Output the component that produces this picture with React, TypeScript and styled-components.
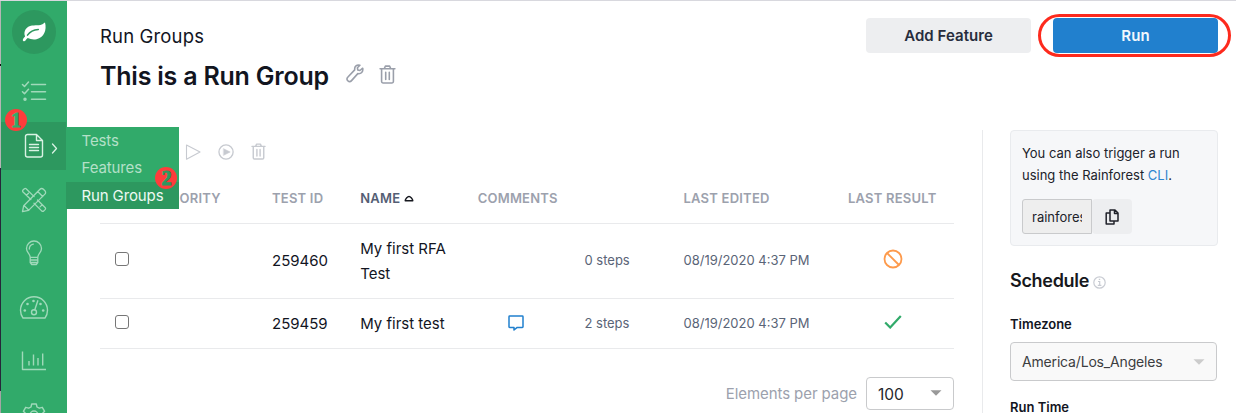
import React from "react";
import styled, { createGlobalStyle, css } from "styled-components";

const GlobalStyle = createGlobalStyle`
  * { box-sizing: border-box; }
  body { margin: 0; background: #fff; font-family: Inter, "Liberation Sans", sans-serif; color: #12151f; overflow: hidden; }
  svg { display: block; flex: none; }
`;

const Page = styled.div`
  display: flex;
  height: 413px;
  overflow: hidden;
  border-top: 1px solid #d8d8de;
`;

const Edge = styled.div`
  width: 1.4px;
  flex: none;
  background: linear-gradient(#b5b5b5 0 63px, #111 63px 65px, #b5b5b5 65px 167px, #26263a 167px 390px, #a5a5a5 390px);
`;

const Sidebar = styled.nav`
  width: 65.6px;
  flex: none;
  background: #31aa6a;
  display: flex;
  flex-direction: column;
  align-items: stretch;
  padding-top: 9px;
`;

const Logo = styled.div`
  width: 44px;
  height: 44px;
  flex: none;
  margin: 0 auto 14px;
  border-radius: 50%;
  background: #2d985f;
  display: flex;
  align-items: center;
  justify-content: center;
`;

const NavItem = styled.div<{ $active?: boolean }>`
  position: relative;
  height: 48px;
  margin: 0 1px 5.8px 0;
  flex: none;
  display: flex;
  align-items: center;
  justify-content: center;
  color: ${(p) => (p.$active ? "#d9f2e4" : "#a0d9ba")};
  background: ${(p) => (p.$active ? "#2d985f" : "transparent")};
`;

const Chevron = styled.svg`
  position: absolute;
  left: 50px;
  top: 21px;
`;

const Submenu = styled.div`
  position: absolute;
  z-index: 2;
  left: 64.6px;
  top: 5px;
  width: 113px;
  background: #31aa6a;
`;

const SubItem = styled.div<{ $active?: boolean }>`
  height: ${(p) => (p.$active ? 27 : 27.5)}px;
  line-height: 27px;
  padding-left: 15.5px;
  font-size: 15px;
  white-space: nowrap;
  letter-spacing: -0.12px;
  color: ${(p) => (p.$active ? "#eefaf3" : "#b4e0c8")};
  background: ${(p) => (p.$active ? "#2d985f" : "transparent")};
`;

const Step = styled.span<{ $x: number; $y: number; $digit: string }>`
  position: absolute;
  z-index: 3;
  left: ${(p) => p.$x}px;
  top: ${(p) => p.$y}px;
  width: 22px;
  height: 22px;
  border-radius: 50%;
  background: #fe3c3b;
  color: ${(p) => p.$digit};
  font: bold 20px/22px "Liberation Serif", serif;
  -webkit-text-stroke: 1px ${(p) => p.$digit};
  text-align: center;
`;

const Main = styled.main`
  flex: 1;
  min-width: 0;
  padding: 17px 18px 0 33px;
`;

const Header = styled.header`
  display: flex;
  justify-content: space-between;
  height: 112px;
`;

const Crumb = styled.div`
  font-size: 18.5px;
  line-height: 24px;
  letter-spacing: 0.15px;
  margin-top: 6px;
`;

const TitleRow = styled.div`
  display: flex;
  align-items: center;
  margin-top: 12px;
  color: #9a9faa;
`;

const Title = styled.h1`
  margin: 0 17px 0 0;
  font-size: 25px;
  line-height: 32px;
  font-weight: 600;
  letter-spacing: -0.22px;
  color: #12151f;
  white-space: nowrap;
`;

const TitleIcon = styled.span`
  margin: -4px 15px 0 0;
`;

const Actions = styled.div`
  display: flex;
  gap: 22px;
`;

const Button = styled.button<{ $primary?: boolean }>`
  position: relative;
  width: 165px;
  height: 35px;
  padding: 0;
  border: 0;
  border-radius: 4px;
  font: 600 15px/35px Inter, sans-serif;
  letter-spacing: 0.05px;
  color: ${(p) => (p.$primary ? "#f2f8fd" : "#272d3d")};
  background: ${(p) => (p.$primary ? "#2180ce" : "#edeef0")};
`;

const Ring = styled.span`
  position: absolute;
  inset: -4px -13px -4px -15px;
  border: 3px solid #fd2a1d;
  border-radius: 22px;
`;

const Columns = styled.div`
  display: flex;
`;

const TableArea = styled.section`
  width: 854px;
  flex: none;
`;

const Toolbar = styled.div`
  display: flex;
  gap: 16px;
  height: 43px;
  align-items: center;
  padding-left: 84.5px;
  color: #c7cad0;
`;

const Row = styled.div<{ $h: number }>`
  display: grid;
  grid-template-columns: 58.5px 113.5px 88.2px 117.5px 106.8px 99px 164.5px 106px;
  height: ${(p) => p.$h}px;
  align-items: center;
  border-bottom: 1px solid #e9eaec;
`;

const Th = styled.div<{ $active?: boolean }>`
  display: flex;
  align-items: center;
  gap: 4px;
  font-size: 13px;
  line-height: 18px;
  font-weight: 600;
  letter-spacing: 0.22px;
  white-space: nowrap;
  color: ${(p) => (p.$active ? "#545e74" : "#9ca1ad")};
`;

const Strong = styled.div<{ $lift?: number }>`
  font-size: 15px;
  line-height: 25px;
  padding: 0 10px ${(p) => p.$lift ?? 0}px 0;
`;

const Small = styled.div<{ $lift?: number }>`
  font-size: 13px;
  line-height: 20px;
  padding-bottom: ${(p) => p.$lift ?? 1}px;
  color: #5a6477;
  white-space: nowrap;
`;

const Checkbox = styled.span`
  display: block;
  width: 14px;
  height: 14px;
  margin: -4px 0 0 15px;
  border: 1px solid #767676;
  border-radius: 3px;
`;

const IconCell = styled.div<{ $left: number; $lift: number }>`
  padding: 0 0 ${(p) => p.$lift}px ${(p) => p.$left}px;
`;

const Pager = styled.div`
  display: flex;
  justify-content: flex-end;
  align-items: center;
  margin-top: 28px;
  font-size: 15px;
  letter-spacing: -0.08px;
  color: #9ca1ad;
`;

const Select = styled.div<{ $kind: "pager" | "zone" }>`
  display: flex;
  align-items: center;
  justify-content: space-between;
  border: 1px solid #c9cacc;
  border-radius: 4px;
  ${(p) =>
    p.$kind === "pager"
      ? css`width: 88px; height: 33px; margin-left: 9px; padding: 2px 11px 0 11px; font-size: 15.5px; color: #24262c; svg { color: #999; margin-top: -3px; }`
      : css`width: 207px; height: 39px; margin-top: 9px; padding: 0 11px; font-size: 14px; letter-spacing: -0.17px; color: #3c3d40; background: #f9f9f9; svg { color: #ccc; }`}
`;

const Aside = styled.aside`
  flex: 1;
  margin-left: 28px;
  padding-left: 27px;
  border-left: 1px solid #e9eaec;
  height: 290px;
`;

const Card = styled.div`
  height: 116px;
  padding: 11px;
  border: 1px solid #e9ebee;
  border-radius: 4px;
  background: #f6f7f9;
  font-size: 13px;
  line-height: 22px;
  color: #20222a;
  white-space: nowrap;
`;

const Link = styled.span`
  color: #2f86cf;
`;

const Command = styled.div`
  display: flex;
  margin-top: 13px;
`;

const CommandInput = styled.div`
  width: 70px;
  height: 35px;
  padding: 0 9px;
  border: 1px solid #c9cacc;
  border-radius: 3px 0 0 3px;
  background: #eeeeee;
  line-height: 35px;
`;

const Clip = styled.div`
  overflow: hidden;
`;

const CopyButton = styled.div`
  display: flex;
  align-items: center;
  justify-content: center;
  width: 40px;
  height: 35px;
  border-radius: 4px;
  background: #edeef0;
`;

const Section = styled.h2`
  display: flex;
  align-items: center;
  gap: 4px;
  margin: 23px 0 0;
  font-size: 18px;
  line-height: 24px;
  font-weight: 600;
  letter-spacing: -0.3px;
  color: #17181c;

  svg { margin-top: 2px; }
`;

const Label = styled.div<{ $top: number }>`
  margin-top: ${(p) => p.$top}px;
  font-size: 13px;
  line-height: 18px;
  font-weight: 600;
`;

const line = { fill: "none", stroke: "currentColor", strokeLinecap: "round", strokeLinejoin: "round" } as const;

const Leaf = () => (
  <svg width="26" height="22" viewBox="0 0 26 22">
    <path d="M24 1.5C26 9 23 16.5 15.5 18.2c-3.5.8-6.2-.2-8.8-1.2-1 .8-1.7 1.9-2.4 2.8-1 1-3 .1-2.4-1.4.5-1.2 1.6-2.1 2.2-2.9C1.9 10.5 5.5 5.3 11 4.6c5-.7 9.5.4 12-2.6z" fill="#fff" />
    <path d="M6.500 14.200c2.500-3.700 6-5.500 10.800-5.700" fill="none" stroke="#2d985f" strokeWidth="1.500" strokeLinecap="round" />
  </svg>
);

const TasksIcon = () => (
  <svg width="26" height="22" viewBox="0 0 26 22" {...line} strokeWidth="1.500">
    <path d="M1.500 3.500l2 2 4-4.500M1.500 10.700l2 2 4-4.500M10.500 3.500h14M10.500 10.700h14M10.500 18.200h14" />
    <circle cx="4" cy="18.200" r="1" fill="currentColor" />
  </svg>
);

const FileIcon = () => (
  <svg width="20" height="26" viewBox="0 0 20 26" {...line} strokeWidth="1.400">
    <path d="M12.500 1.500H3.500a2 2 0 0 0-2 2v18.500a2 2 0 0 0 2 2h13a2 2 0 0 0 2-2V7.500zM12.500 1.500v6h6M5.500 11.500h9M5.500 14.500h9M5.500 17.500h9" />
  </svg>
);

const ToolsIcon = () => (
  <svg width="26" height="26" viewBox="0 0 26 26" {...line} strokeWidth="1.300">
    <path d="M9.800 12.500L1.800 4.800a1.500 1.500 0 0 1 0-1.600l1.600-1.500a1.500 1.500 0 0 1 1.700 0l8 7.900M16.500 13l7.800 7.700a1.500 1.500 0 0 1 0 1.700l-1.700 1.700a1.500 1.500 0 0 1-1.700 0L13 16.300M5.500 8.300l2-2M19 19.900l2-2" />
    <path d="M19 2.200a2.400 2.400 0 0 1 3.400 0l1.500 1.500a2.400 2.400 0 0 1 0 3.400L7.500 23.400l-6 1.300 1.200-6zM16.700 4.500l5 5M3 18.500l4.800 4.800" />
  </svg>
);

const BulbIcon = () => (
  <svg width="18" height="26" viewBox="0 0 18 26" {...line} strokeWidth="1.300">
    <path d="M5.200 17.300C5 13.500 1.500 12.500 1.500 8.500a7.500 7.500 0 0 1 15 0c0 4-3.500 5-3.700 8.800zM5.200 17.300v5.200l1.500 2h4.600l1.500-2v-5.200M5.200 20h7.600M5.500 22.500h7M4.300 9c0-2.600 1.600-4.400 4-4.900" />
  </svg>
);

const GaugeIcon = () => (
  <svg width="30" height="26" viewBox="0 0 30 26" {...line} strokeWidth="1.400">
    <path d="M4 24h22c1.700-2.200 2.500-4.700 2.500-7.700a13.500 13.500 0 0 0-27 0c0 3 .8 5.500 2.500 7.700zM15.800 15.800l3-9" />
    <circle cx="15" cy="18.300" r="2.500" />
    <g fill="currentColor" stroke="none"><circle cx="5.800" cy="16.500" r="1.300" /><circle cx="8.500" cy="10" r="1.300" /><circle cx="14.500" cy="7" r="1.300" /><circle cx="21.500" cy="10" r="1.300" /><circle cx="24.200" cy="16.500" r="1.300" /></g>
  </svg>
);

const ChartIcon = () => (
  <svg width="26" height="22" viewBox="0 0 26 22" {...line} strokeWidth="1.400" strokeLinecap="butt">
    <path d="M1.500 1.500v18h23.500M8 11v4.500M12.500 4.500v11M17 8v7.500M21.700 3.500v12" />
  </svg>
);

const GearIcon = () => (
  <svg width="26" height="26" viewBox="0 0 26 26" {...line} strokeWidth="1.400">
    <path d="M10.700 2h4.600l.7 3 2.300 1.200 3-.9 2.300 4-2.200 2.200v3l2.200 2.200-2.300 4-3-.9L16 21l-.7 3h-4.600l-.7-3-2.300-1.200-3 .9-2.300-4 2.200-2.200v-3L2.400 9.300l2.300-4 3 .9L10 5z" />
    <circle cx="13" cy="13" r="4" />
  </svg>
);

const WrenchIcon = () => (
  <svg width="18" height="20" viewBox="0 0 18 20" {...line} strokeWidth="1.600">
    <path d="M16.700 4.200l-2.800 2.300-2.100-.5-.4-2.200 2.500-2.500c-3-1-5.700 1.200-5.200 4.600L1.700 13.300a2.200 2.200 0 0 0 0 3.300l.4.400a2.200 2.200 0 0 0 3.200-.1l6.500-7.300c3.200.6 5.600-1.800 4.900-5.400z" />
  </svg>
);

const TrashIcon = ({ size }: { size: number }) => (
  <svg width={size - 2} height={size} viewBox="0 0 16 18" {...line} strokeWidth="1.500">
    <path d="M1 3.500h14M5 3.300l1-2.200h4l1 2.200M2.400 3.600v12.100c0 .8.500 1.300 1.300 1.300h8.600c.8 0 1.300-.5 1.300-1.300V3.600M6.300 6.800v7M9.700 6.800v7" />
  </svg>
);

const Caret = () => (
  <svg width="12" height="6" viewBox="0 0 12 6"><path d="M.5.300h11L6 5.800z" fill="currentColor" /></svg>
);

export default function App() {
  return (
    <>
      <GlobalStyle />
      <Page>
        <Edge />
        <Sidebar>
          <Logo><Leaf /></Logo>
          <NavItem><TasksIcon /></NavItem>
          <NavItem $active>
            <FileIcon />
            <Chevron width="7" height="11" viewBox="0 0 7 11" {...line} strokeWidth="1.300"><path d="M1.500 1l4 4.500-4 4.500" /></Chevron>
            <Step $x={3.5} $y={-13} $digit="#31aa6a">1</Step>
            <Submenu>
              <SubItem>Tests</SubItem>
              <SubItem>Features</SubItem>
              <SubItem $active>Run Groups</SubItem>
              <Step $x={89.5} $y={40} $digit="#2d985f">2</Step>
            </Submenu>
          </NavItem>
          <NavItem><ToolsIcon /></NavItem>
          <NavItem><BulbIcon /></NavItem>
          <NavItem><GaugeIcon /></NavItem>
          <NavItem><ChartIcon /></NavItem>
          <NavItem><GearIcon /></NavItem>
        </Sidebar>
        <Main>
          <Header>
            <div>
              <Crumb>Run Groups</Crumb>
              <TitleRow>
                <Title>This is a Run Group</Title>
                <TitleIcon><WrenchIcon /></TitleIcon>
                <TitleIcon><TrashIcon size={19} /></TitleIcon>
              </TitleRow>
            </div>
            <Actions>
              <Button>Add Feature</Button>
              <Button $primary>Run<Ring /></Button>
            </Actions>
          </Header>
          <Columns>
            <TableArea>
              <Toolbar>
                <svg width="18" height="18" viewBox="0 0 18 18" {...line} strokeWidth="1.100"><path d="M2.500 2l13.500 7-13.500 7.200z" /></svg>
                <svg width="17" height="18" viewBox="0 0 18 18" {...line} strokeWidth="1.400"><circle cx="8.500" cy="9" r="7.500" /><path d="M6 5.500l7 3.500-7 3.500z" fill="currentColor" strokeWidth=".5" /></svg>
                <TrashIcon size={17} />
              </Toolbar>
              <Row $h={51}>
                <div />
                <Th>PRIORITY</Th>
                <Th>TEST ID</Th>
                <Th $active>NAME
                  <svg width="10" height="7" viewBox="0 0 10 7" fill="none" stroke="#16181f" strokeWidth="1.400" strokeLinejoin="round"><path d="M1.200 5.700C1.200 4.200 3.500 1.500 5 1.500S8.800 4.200 8.800 5.700z" /></svg>
                </Th>
                <Th>COMMENTS</Th>
                <div />
                <Th>LAST EDITED</Th>
                <Th>LAST RESULT</Th>
              </Row>
              <Row $h={75}>
                <Checkbox />
                <div />
                <Strong $lift={2}>259460</Strong>
                <Strong>My first RFA Test</Strong>
                <div />
                <Small $lift={2}>0 steps</Small>
                <Small $lift={2}>08/19/2020 4:37 PM</Small>
                <IconCell $left={35} $lift={4}>
                  <svg width="20" height="20" viewBox="0 0 20 20" fill="none" stroke="#fd9a4c" strokeWidth="1.800"><circle cx="10" cy="10" r="8.500" /><path d="M4 4l12 12" /></svg>
                </IconCell>
              </Row>
              <Row $h={50}>
                <Checkbox />
                <div />
                <Strong>259459</Strong>
                <Strong>My first test</Strong>
                <IconCell $left={30} $lift={1}>
                  <svg width="16" height="16" viewBox="0 0 16 16" {...line} stroke="#2180ce" strokeWidth="1.500"><path d="M1.700 1h12.600c.5 0 .7.300.7.700v10c0 .5-.3.700-.7.700H9.200L6 15v-2.600H1.700c-.5 0-.7-.3-.7-.7v-10c0-.5.300-.7.700-.7z" /></svg>
                </IconCell>
                <Small>2 steps</Small>
                <Small>08/19/2020 4:37 PM</Small>
                <IconCell $left={36} $lift={3}>
                  <svg width="18" height="14" viewBox="0 0 18 14" fill="none" stroke="#31aa6a" strokeWidth="2.200"><path d="M1.200 7.500l5 5L16.800 1" /></svg>
                </IconCell>
              </Row>
              <Pager>
                Elements per page
                <Select $kind="pager">100<Caret /></Select>
              </Pager>
            </TableArea>
            <Aside>
              <Card>
                You can also trigger a run<br />using the Rainforest <Link>CLI</Link>.
                <Command>
                  <CommandInput><Clip>rainforest</Clip></CommandInput>
                  <CopyButton>
                    <svg width="14" height="16" viewBox="0 0 14 16" {...line} strokeWidth="1.500"><path d="M5 1h5l3 3v8H5zM9.500 1v3.500H13M5 4H1.200v11H9v-3" /></svg>
                  </CopyButton>
                </Command>
              </Card>
              <Section>Schedule
                <svg width="13" height="13" viewBox="0 0 13 13" fill="none" stroke="#c9ccd3" strokeWidth="1.200"><circle cx="6.500" cy="6.500" r="5.700" /><path d="M5 5.500h1.700v3.800M4.800 9.400h3.600M5.800 3.300h1.400" /></svg>
              </Section>
              <Label $top={22}>Timezone</Label>
              <Select $kind="zone">America/Los_Angeles<Caret /></Select>
              <Label $top={17}>Run Time</Label>
            </Aside>
          </Columns>
        </Main>
      </Page>
    </>
  );
}
